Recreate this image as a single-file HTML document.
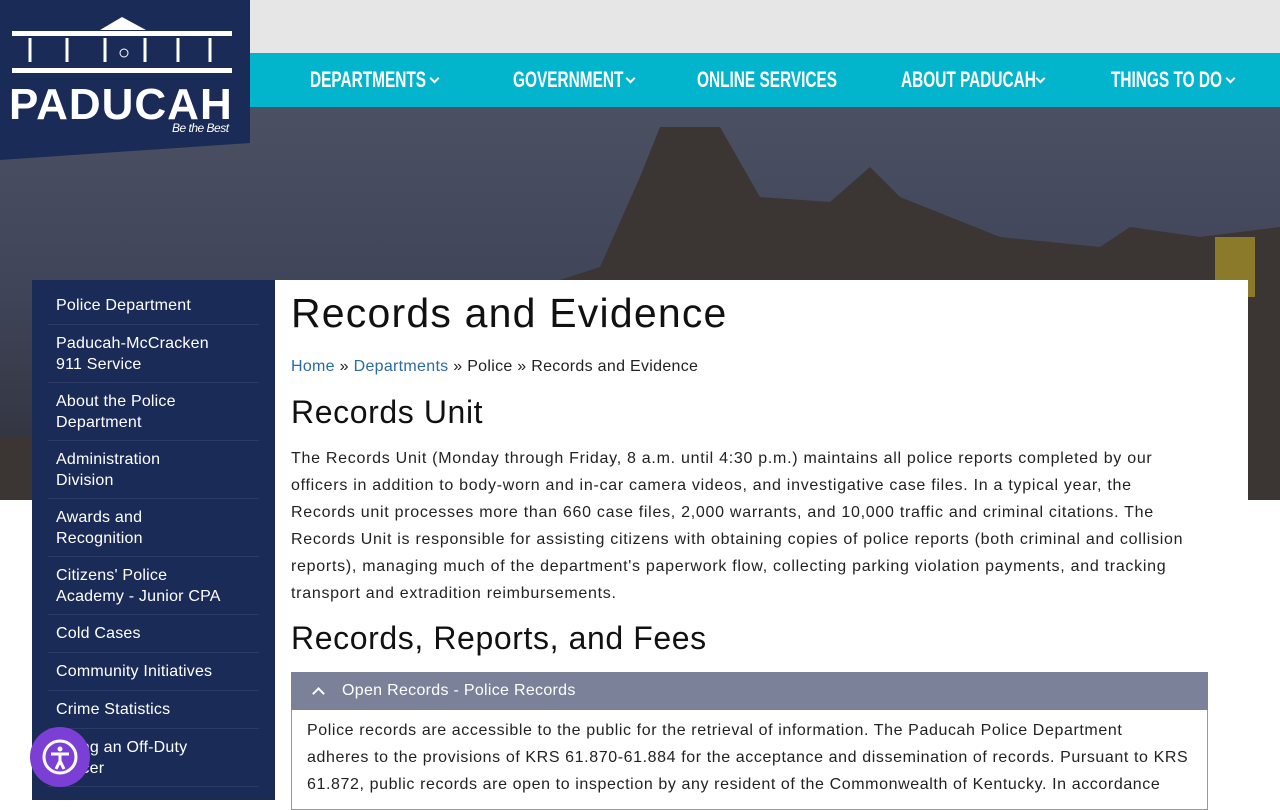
<!DOCTYPE html>
<html><head><meta charset="utf-8"><style>
*{box-sizing:border-box;margin:0;padding:0}
body{width:1280px;height:800px;overflow:hidden;position:relative;background:#fff;font-family:"Liberation Sans",sans-serif;color:#222}
.top{position:absolute;left:0;top:0;width:1280px;height:53px;background:#e6e6e6}
.hero{position:absolute;left:0;top:107px;width:1280px;height:393px;background:linear-gradient(180deg,#4b5062 0%,#40455a 45%,#2f3038 100%);overflow:hidden}
.nav{position:absolute;left:250px;top:53px;width:1030px;height:54px;background:#02b5cc;color:#fff;font-weight:bold;font-size:22px}
.nav span{position:absolute;top:14px;white-space:nowrap;transform:scaleX(0.7);transform-origin:left}
.nav i{position:absolute;top:22px;width:7px;height:7px;border-right:2px solid #fff;border-bottom:2px solid #fff;transform:rotate(45deg)}
.logo{position:absolute;left:0;top:0;width:250px;height:160px;background:#1b2b57;clip-path:polygon(0 0,100% 0,100% 143px,0 160px)}
.logo .t{position:absolute;left:9px;top:80px;color:#fff;font-weight:bold;font-size:44px;letter-spacing:1px}
.logo .s{position:absolute;left:172px;top:121px;color:#fff;font-style:italic;font-size:12px;letter-spacing:-0.5px}
.side{position:absolute;left:32px;top:280px;width:243px;height:520px;background:#1b2b57;color:#fff;font-size:16px;letter-spacing:0.2px;padding-top:7px}
.side div{margin:0 16px;padding:8px 8px;border-bottom:1px solid #2c3c66;line-height:21px;white-space:nowrap}
.side div.two{padding:8px 8px 7px}
.main{position:absolute;left:275px;top:280px;width:973px;height:520px;background:#fff}
h1{font-weight:normal;font-size:41px;letter-spacing:1.2px;position:absolute;left:16px;top:10px;color:#111}
.bc{position:absolute;left:16px;top:78px;font-size:16px;letter-spacing:0.3px}
.bc a{color:#2a6aa8;text-decoration:none}
h2{font-weight:normal;font-size:32px;letter-spacing:0.6px;position:absolute;left:16px;color:#111}
p{position:absolute;left:16px;font-size:16px;line-height:27px;white-space:nowrap;letter-spacing:0.72px}
.acc{position:absolute;left:16px;top:392px;width:917px;height:38px;background:#7a8199;color:#fff;font-size:16px;padding:10px 0 0 51px;letter-spacing:0.3px}
.acc i{position:absolute;left:23px;top:17px;width:9px;height:9px;border-left:2px solid #fff;border-top:2px solid #fff;transform:rotate(45deg)}
.accb{position:absolute;left:16px;top:430px;width:917px;height:100px;border:1px solid #999;border-top:none}
.a11y{position:absolute;left:30px;top:727px;width:60px;height:60px;border-radius:50%;background:#7b3fd6}
</style></head><body>
<div class="top"></div>
<div class="hero">
<svg width="1280" height="393" style="position:absolute;left:0;top:0"><path d="M560 173 L600 160 L640 70 L660 20 L720 20 L760 90 L830 95 L870 60 L900 90 L1000 130 L1100 140 L1130 120 L1200 130 L1280 120 L1280 393 L0 393 L0 330 L560 320Z" fill="#3b3634"/><rect x="1215" y="130" width="40" height="60" fill="#8a7a2a"/></svg>
</div>
<div class="nav"><span style="left:60px">DEPARTMENTS</span><i style="left:181px"></i><span style="left:263px">GOVERNMENT</span><i style="left:377px"></i><span style="left:447px">ONLINE SERVICES</span><span style="left:651px">ABOUT PADUCAH</span><i style="left:787px"></i><span style="left:861px">THINGS TO DO</span><i style="left:977px"></i></div>
<div class="logo">
<svg width="250" height="80" style="position:absolute;left:0;top:0"><polygon points="100,30 122,17 146,30" fill="#fff"/><rect x="12" y="31" width="220" height="5" fill="#fff"/><g stroke="#fff" stroke-width="3"><line x1="30" y1="38" x2="30" y2="62"/><line x1="67" y1="38" x2="67" y2="62"/><line x1="105" y1="38" x2="105" y2="62"/><line x1="145" y1="38" x2="145" y2="62"/><line x1="178" y1="38" x2="178" y2="62"/><line x1="210" y1="38" x2="210" y2="62"/></g><rect x="12" y="68" width="220" height="5" fill="#fff"/><circle cx="124" cy="53" r="4" stroke="#fff" fill="none"/></svg>
<div class="t">PADUCAH</div><div class="s">Be the Best</div></div>
<div class="side">
<div>Police Department</div><div class="two">Paducah-McCracken<br>911 Service</div><div class="two">About the Police<br>Department</div><div class="two">Administration<br>Division</div><div class="two">Awards and<br>Recognition</div><div class="two">Citizens' Police<br>Academy - Junior CPA</div><div>Cold Cases</div><div>Community Initiatives</div><div>Crime Statistics</div><div class="two">Hiring an Off-Duty<br>Officer</div>
</div>
<div class="main">
<h1>Records and Evidence</h1>
<div class="bc"><a>Home</a> » <a>Departments</a> » Police » Records and Evidence</div>
<h2 style="top:114px">Records Unit</h2>
<p style="top:165px">The Records Unit (Monday through Friday, 8 a.m. until 4:30 p.m.) maintains all police reports completed by our<br>officers in addition to body-worn and in-car camera videos, and investigative case files. In a typical year, the<br>Records unit processes more than 660 case files, 2,000 warrants, and 10,000 traffic and criminal citations. The<br>Records Unit is responsible for assisting citizens with obtaining copies of police reports (both criminal and collision<br>reports), managing much of the department's paperwork flow, collecting parking violation payments, and tracking<br>transport and extradition reimbursements.</p>
<h2 style="top:340px">Records, Reports, and Fees</h2>
<div class="acc"><i></i>Open Records - Police Records</div>
<div class="accb"></div>
<p style="top:437px;left:32px;letter-spacing:0.6px">Police records are accessible to the public for the retrieval of information. The Paducah Police Department<br>adheres to the provisions of KRS 61.870-61.884 for the acceptance and dissemination of records. Pursuant to KRS<br>61.872, public records are open to inspection by any resident of the Commonwealth of Kentucky. In accordance</p>
</div>
<div class="a11y"><svg width="60" height="60"><circle cx="30" cy="30" r="16" stroke="#fff" stroke-width="3" fill="none"/><circle cx="30" cy="22" r="2.5" fill="#fff"/><path d="M21 27h18M30 27v7l-4 8M30 34l4 8" stroke="#fff" stroke-width="3" fill="none"/></svg></div>
</body></html>
